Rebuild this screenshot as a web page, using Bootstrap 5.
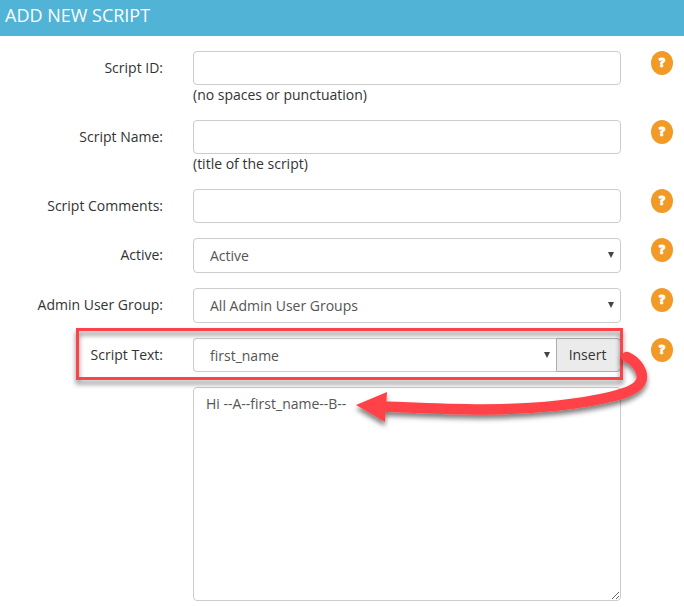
<!DOCTYPE html>
<html lang="en">
<head>
<meta charset="utf-8">
<title>Add New Script</title>
<link href="https://cdn.jsdelivr.net/npm/bootstrap@5.3.0/dist/css/bootstrap.min.css" rel="stylesheet">
<style>
body{font-family:"Open Sans","Noto Sans",sans-serif;font-size:14px;line-height:20px;color:#333;background:#fff;overflow:hidden}
.page-title{height:36px;background:#51b3d6;color:#fff;font-size:18px;line-height:31px;padding-left:5px}
.script-form{padding-top:15px}
.field-row{display:grid;grid-template-columns:163px 428px 22px;column-gap:30px;margin-bottom:15px}
.field-label{padding-top:7px;text-align:right;white-space:nowrap}
.form-control,.form-select{font-size:14px;line-height:20px;height:34px;border:1px solid #ccc;border-radius:4px;color:#555;padding:6px 12px;box-shadow:none}
.form-select{height:35px;padding:7px 16px 6px;background-image:none;appearance:none}
.select-box{position:relative}
.select-box::after{content:"";position:absolute;right:7px;top:14px;border:3px solid transparent;border-top:6px solid #444;border-bottom:0}
.picker .form-select{height:34px;padding-bottom:5px;border-radius:4px 0 0 4px;border-right:0}
.picker .select-box::after{right:6px}
.btn-insert{width:65px;height:34px;padding:0 2px 0 0;font-size:14px;line-height:20px;color:#333;background:#ebebeb;border:1px solid #adadad;border-radius:0 4px 4px 0}
.help-dot{width:22px;height:24px;border-radius:50%;background:#f29a26;color:#fff;font-size:12px;line-height:23px;font-weight:800;text-align:center;-webkit-text-stroke:.8px #fff}
textarea.form-control{height:214px}
.annotation{position:absolute;left:0;top:0;pointer-events:none;z-index:5}
</style>
</head>
<body>
<h1 class="page-title m-0 fw-normal">ADD NEW SCRIPT</h1>
<form class="script-form">
  <div class="field-row">
    <label class="field-label" for="sid">Script ID:</label>
    <div><input id="sid" class="form-control"><div>(no spaces or punctuation)</div></div>
    <span class="help-dot">?</span>
  </div>
  <div class="field-row">
    <label class="field-label" for="sname">Script Name:</label>
    <div><input id="sname" class="form-control"><div>(title of the script)</div></div>
    <span class="help-dot">?</span>
  </div>
  <div class="field-row">
    <label class="field-label" for="scom">Script Comments:</label>
    <div><input id="scom" class="form-control"></div>
    <span class="help-dot">?</span>
  </div>
  <div class="field-row">
    <label class="field-label" for="act">Active:</label>
    <div class="select-box"><select id="act" class="form-select"><option>Active</option></select></div>
    <span class="help-dot">?</span>
  </div>
  <div class="field-row">
    <label class="field-label" for="grp">Admin User Group:</label>
    <div class="select-box"><select id="grp" class="form-select"><option>All Admin User Groups</option></select></div>
    <span class="help-dot">?</span>
  </div>
  <div class="field-row">
    <label class="field-label" for="fld">Script Text:</label>
    <div class="picker d-flex"><div class="select-box flex-grow-1"><select id="fld" class="form-select"><option>first_name</option></select></div><button type="button" class="btn btn-insert">Insert</button></div>
    <span class="help-dot">?</span>
  </div>
  <div class="field-row mb-0">
    <span></span>
    <textarea class="form-control" aria-label="Script text">Hi --A--first_name--B--</textarea>
  </div>
</form>
<svg class="annotation" width="684" height="607" viewBox="0 0 684 607" aria-hidden="true">
  <defs>
    <filter id="drop" filterUnits="userSpaceOnUse" x="0" y="300" width="684" height="160"><feDropShadow dx="0" dy="4" stdDeviation="2.5" flood-color="#000" flood-opacity=".5"/></filter>
  </defs>
  <rect x="77.5" y="329.5" width="544" height="49" fill="none" stroke="#ff4346" stroke-width="3" filter="url(#drop)"/>
  <g filter="url(#drop)">
    <path d="M627 357C636 361 642 370 642 377C642 387 628 393 610 397C580 404 535 409 484 409.500C445 409.500 420 408 384 406.500" fill="none" stroke="#ff4346" stroke-width="10.500" stroke-linecap="round" stroke-linejoin="round"/>
    <path d="M356 405L387 392L385 422Z" fill="#ff4346"/>
  </g>
</svg>
<script src="https://cdn.jsdelivr.net/npm/bootstrap@5.3.0/dist/js/bootstrap.bundle.min.js"></script>
</body>
</html>
